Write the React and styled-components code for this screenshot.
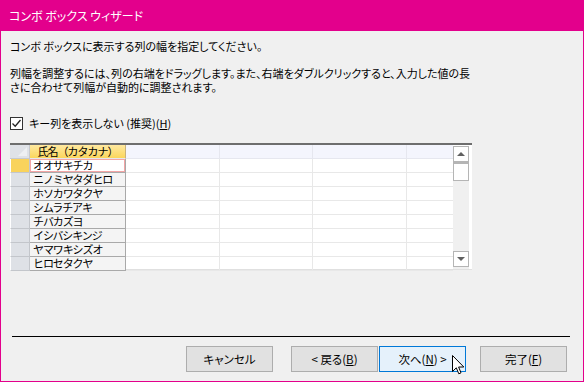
import React from "react";
import styled, { createGlobalStyle } from "styled-components";

const names = [
  "オオサキチカ",
  "ニノミヤタダヒロ",
  "ホソカワタクヤ",
  "シムラチアキ",
  "チバカズヨ",
  "イシバシキンジ",
  "ヤマワキシズオ",
  "ヒロセタクヤ",
];

const widths = [20, 96, 94, 93, 94, 46];

function App() {
  return (
    <>
      <GlobalStyle />
      <Window>
        <TitleBar>コンボ ボックス ウィザード</TitleBar>
        <Body>
          <Line>コンボ ボックスに表示する列の幅を指定してください。</Line>
          <Para>
            列幅を調整するには、列の右端をドラッグします。また、右端をダブルクリックすると、入力した値の長
            <br />
            さに合わせて列幅が自動的に調整されます。
          </Para>
          <CheckRow>
            <CheckBox>
              <svg width="11" height="11" viewBox="0 0 11 11">
                <path d="M1.5 5.5 L4.2 8.2 L9.5 2" fill="none" stroke="#222" strokeWidth="1.3" />
              </svg>
            </CheckBox>
            <span>
              キー列を表示しない (推奨)(<u>H</u>)
            </span>
          </CheckRow>
          <GridBox>
            <Table>
              <Corner />
              <HeadCell $active>氏名（カタカナ）</HeadCell>
              <HeadCell />
              <HeadCell />
              <HeadCell />
              <HeadCell $last />
              {names.map((n, i) => (
                <React.Fragment key={n}>
                  <Selector $current={i === 0} />
                  <NameCell $current={i === 0}>{n}</NameCell>
                  <Cell />
                  <Cell />
                  <Cell />
                  <Cell $last />
                </React.Fragment>
              ))}
            </Table>
            <ScrollBar>
              <ScrollBtn>
                <Arrow />
              </ScrollBtn>
              <Thumb />
              <Track />
              <ScrollBtn>
                <Arrow $down />
              </ScrollBtn>
            </ScrollBar>
          </GridBox>
          <Footer>
            <Separator />
            <Buttons>
              <Button>キャンセル</Button>
              <Button $gap={18}>
                &lt; 戻る(<u>B</u>)
              </Button>
              <Button $gap={1} $focus>
                次へ(<u>N</u>) &gt;
                <Cursor width="13" height="21" viewBox="0 0 13 21">
                  <path
                    d="M0.5 0.5 L0.5 16.5 L4.3 12.8 L6.8 18.8 L9 17.8 L6.6 12 L11.8 12 Z"
                    fill="#fff"
                    stroke="#000"
                    strokeWidth="1"
                  />
                </Cursor>
              </Button>
              <Button $gap={14}>
                完了(<u>F</u>)
              </Button>
            </Buttons>
          </Footer>
        </Body>
      </Window>
    </>
  );
}

export default App;

const GlobalStyle = createGlobalStyle`
  body {
    margin: 0;
    font-family: "Noto Sans CJK JP", "Noto Sans", sans-serif;
  }
  u {
    text-decoration: underline;
    text-underline-offset: 1px;
  }
`;

const Window = styled.div`
  width: 584px;
  height: 382px;
  box-sizing: border-box;
  border: 1px solid #e3008c;
  border-top: none;
  background: #f0f0f0;
  display: flex;
  flex-direction: column;
  font-size: 11px;
  color: #000;
  font-feature-settings: "palt";
`;

const TitleBar = styled.div`
  height: 31px;
  flex-shrink: 0;
  margin: 0 -1px;
  background: #e3008c;
  color: #fff;
  font-size: 12px;
  display: flex;
  align-items: center;
  padding-left: 9px;
  padding-bottom: 1px;
  box-sizing: border-box;
`;

const Body = styled.div`
  flex: 1;
  display: flex;
  flex-direction: column;
  padding: 8px 0 9px 9px;
`;

const Line = styled.div`
  line-height: 14px;
  white-space: nowrap;
`;

const Para = styled(Line)`
  margin-top: 13px;
`;

const CheckRow = styled.div`
  margin-top: 22px;
  height: 14px;
  display: flex;
  align-items: center;
  gap: 6px;
  line-height: 14px;
`;

const CheckBox = styled.div`
  width: 11px;
  height: 11px;
  border: 1px solid #333;
  background: #fff;
  display: flex;
`;

const GridBox = styled.div`
  margin-top: 13px;
  width: 462px;
  height: 127px;
  box-sizing: border-box;
  border-top: 2px solid #6e6e6e;
  background: #fff;
  display: flex;
  padding-right: 3px;
  border-bottom: 1px solid #e0e0e0;
`;

const Table = styled.div`
  display: grid;
  grid-template-columns: ${widths.map((w) => w + "px").join(" ")};
  grid-auto-rows: 14px;
  font-size: 11px;
  line-height: 13px;
  font-feature-settings: normal;
`;

const Corner = styled.div`
  background: #dfe2e7;
  border-right: 1px solid #c6c9ce;
  border-bottom: 1px solid #c6c9ce;
  position: relative;
  &::after {
    content: "";
    position: absolute;
    right: 2px;
    bottom: 2px;
    border-left: 9px solid transparent;
    border-bottom: 9px solid #eef0f3;
  }
`;

const HeadCell = styled.div`
  background: ${(p) =>
    p.$active ? "linear-gradient(#ffe9a0, #fbd65c)" : "#f4f5fd"};
  border-right: 1px solid ${(p) => (p.$active ? "#c9b27a" : "#e6e7ef")};
  border-bottom: 1px solid #e6e7ef;
  border-right-width: ${(p) => (p.$last ? 0 : 1)}px;
  text-align: center;
  letter-spacing: -1px;
  white-space: nowrap;
`;

const Selector = styled.div`
  background: ${(p) => (p.$current ? "#f9d35c" : "#dee1e6")};
  border-right: 1px solid #c3c6cb;
  border-bottom: 1px solid #c3c6cb;
  border-left: 1px solid #fff;
`;

const NameCell = styled.div`
  background: ${(p) => (p.$current ? "#fff" : "#f4f4f4")};
  border-right: 1px solid #a9a9a9;
  border-bottom: 1px solid #a9a9a9;
  box-shadow: ${(p) => (p.$current ? "inset 0 0 0 1px #f3a5a5" : "none")};
  padding-left: 3px;
  letter-spacing: -1.1px;
  white-space: nowrap;
`;

const Cell = styled.div`
  border-right: 1px solid #e8e8e8;
  border-right-width: ${(p) => (p.$last ? 0 : 1)}px;
  border-bottom: 1px solid #e8e8e8;
`;

const ScrollBar = styled.div`
  width: 16px;
  margin-top: 1px;
  background: #f0f0f0;
  display: flex;
  flex-direction: column;
  padding-bottom: 2px;
`;

const ScrollBtn = styled.div`
  height: 14px;
  border: 1px solid #b5b5b5;
  background: #fff;
  display: flex;
  align-items: center;
  justify-content: center;
`;

const Arrow = styled.div`
  width: 0;
  height: 0;
  border-left: 4px solid transparent;
  border-right: 4px solid transparent;
  ${(p) =>
    p.$down
      ? "border-top: 4px solid #606060;"
      : "border-bottom: 4px solid #606060;"}
`;

const Thumb = styled.div`
  height: 16px;
  border: 1px solid #b5b5b5;
  border-top-width: 2px;
  background: #fff;
`;

const Track = styled.div`
  flex: 1;
`;

const Footer = styled.div`
  margin-top: auto;
`;

const Separator = styled.div`
  height: 1px;
  width: 558px;
  margin-left: 2px;
  background: #000;
`;

const Buttons = styled.div`
  margin-top: 9px;
  display: flex;
  justify-content: flex-end;
  padding-right: 16px;
`;

const Button = styled.div`
  position: relative;
  width: 87px;
  height: 26px;
  box-sizing: border-box;
  margin-left: ${(p) => p.$gap || 0}px;
  border: 1px solid ${(p) => (p.$focus ? "#0078d7" : "#adadad")};
  background: ${(p) => (p.$focus ? "#e5f1fb" : "#e1e1e1")};
  display: flex;
  align-items: center;
  justify-content: center;
  font-size: 11.5px;
  white-space: nowrap;
`;

const Cursor = styled.svg`
  position: absolute;
  left: 72px;
  top: 8px;
`;
